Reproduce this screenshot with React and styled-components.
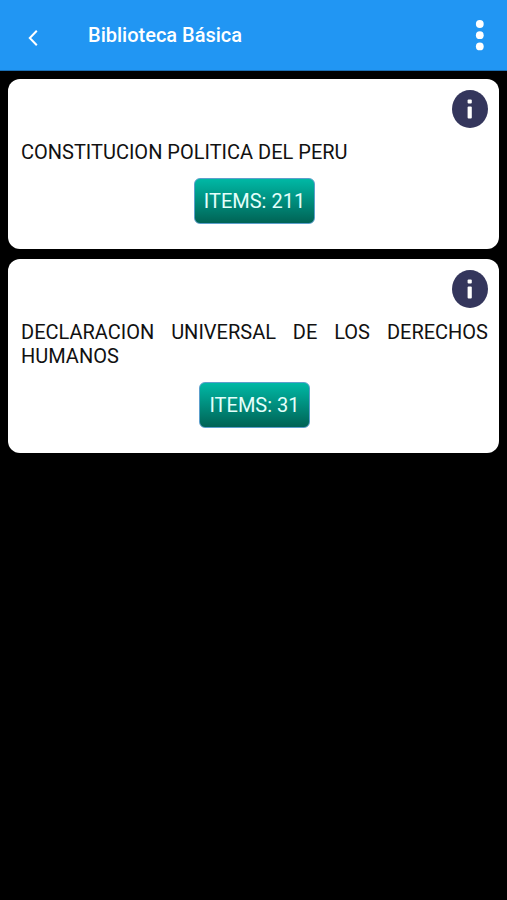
import React from 'react';
import styled, { createGlobalStyle } from 'styled-components';

const GlobalStyle = createGlobalStyle`
  * {
    box-sizing: border-box;
  }
  body {
    margin: 0;
    background: #000;
    font-family: Roboto, sans-serif;
  }
`;

const Page = styled.div`
  min-height: 100vh;
  background: #000;
`;

const Header = styled.header`
  display: flex;
  align-items: center;
  height: 71px;
  padding: 0 12px;
  background: #2196f3;
  border-bottom: 1px solid #1a6fb5;
  color: #fff;
`;

const IconButton = styled.button`
  display: flex;
  align-items: center;
  justify-content: center;
  width: ${(props) => props.$width}px;
  height: 48px;
  padding: 0;
  border: 0;
  background: none;
  color: inherit;
  cursor: pointer;
`;

const BackButton = styled(IconButton)`
  padding-top: 5px;
`;

const Title = styled.h1`
  flex: 1;
  margin: 0;
  padding-left: 34px;
  font-size: 20px;
  line-height: 24px;
  font-weight: 500;
`;

const List = styled.main`
  display: flex;
  flex-direction: column;
  gap: 10px;
  padding: 8px;
`;

const Card = styled.article`
  display: flex;
  flex-direction: column;
  align-items: center;
  padding: 11px 11px 25px 13px;
  border-radius: 12px;
  background: #fff;
`;

const InfoButton = styled(IconButton)`
  align-self: flex-end;
  height: 38px;
`;

const CardTitle = styled.h2`
  width: 100%;
  margin: 12px 0 14px;
  font-size: 20px;
  line-height: 24px;
  font-weight: 400;
  text-align: justify;
  color: #111;
`;

const ItemsButton = styled.button`
  height: 46px;
  padding: 0 9px;
  border: 1px solid #5c9fcc;
  border-radius: 6px;
  background: linear-gradient(#00b8a5, #006355);
  font-family: inherit;
  font-size: 20px;
  line-height: 24px;
  color: #e4fffb;
  cursor: pointer;
`;

const books = [
  { id: 1, name: 'CONSTITUCION POLITICA DEL PERU', items: 211 },
  { id: 2, name: 'DECLARACION UNIVERSAL DE LOS DERECHOS HUMANOS', items: 31 },
];

const BackIcon = () => (
  <svg width="10" height="18" viewBox="0 0 10 18" fill="none" stroke="currentColor" strokeWidth="2">
    <path d="M8.8 1.8 1.8 9l7 7.2" />
  </svg>
);

const MenuIcon = () => (
  <svg width="9" height="32" viewBox="0 0 9 32" fill="currentColor">
    <circle cx="4.8" cy="5" r="3.9" />
    <circle cx="4.8" cy="16.2" r="3.9" />
    <circle cx="4.8" cy="27.4" r="3.9" />
  </svg>
);

const InfoIcon = () => (
  <svg width="36" height="38" viewBox="0 0 36 38">
    <ellipse cx="18" cy="19" rx="18" ry="19" fill="#34365c" />
    <rect x="15.6" y="9.5" width="4.2" height="4" rx="1" fill="#fff" />
    <rect x="15.6" y="16.6" width="4.2" height="12" rx="1" fill="#fff" />
  </svg>
);

const App = () => {
  return (
    <Page>
      <GlobalStyle />
      <Header>
        <BackButton type="button" $width={42} aria-label="Volver">
          <BackIcon />
        </BackButton>
        <Title>Biblioteca Básica</Title>
        <IconButton type="button" $width={32} aria-label="Menú">
          <MenuIcon />
        </IconButton>
      </Header>
      <List>
        {books.map((book) => (
          <Card key={book.id}>
            <InfoButton type="button" $width={36} aria-label="Información">
              <InfoIcon />
            </InfoButton>
            <CardTitle>{book.name}</CardTitle>
            <ItemsButton type="button">ITEMS: {book.items}</ItemsButton>
          </Card>
        ))}
      </List>
    </Page>
  );
};

export default App;
